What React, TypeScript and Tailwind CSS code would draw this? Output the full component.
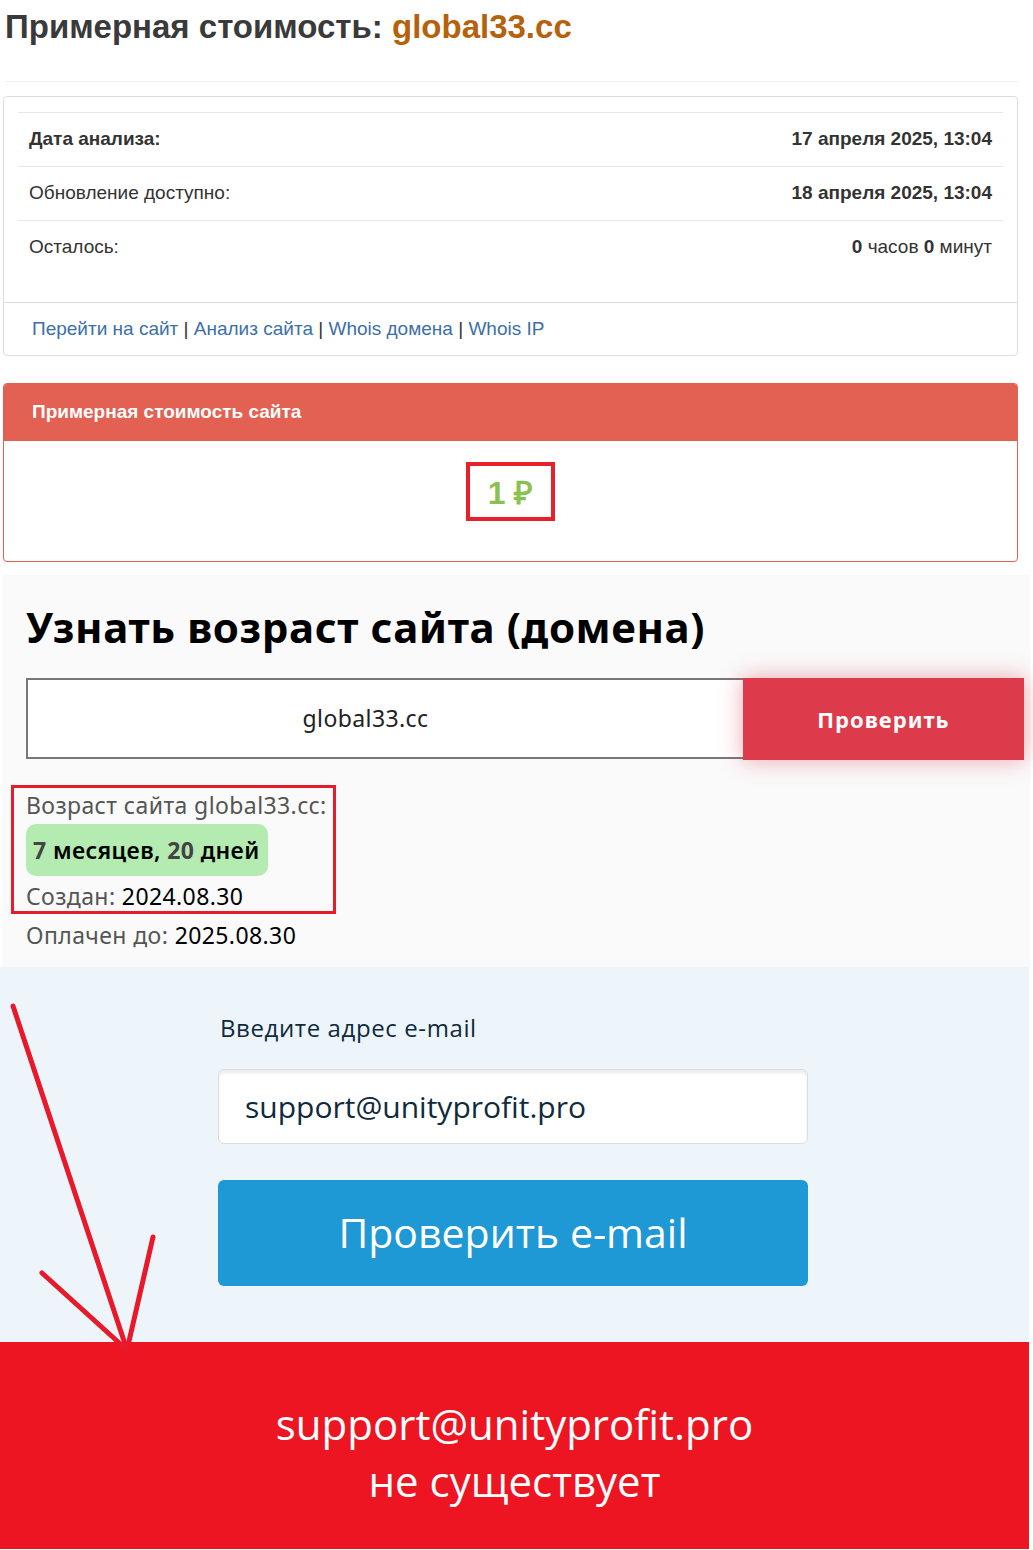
const rows = [
  { label: "Дата анализа:", value: "17 апреля 2025, 13:04", boldLabel: true },
  { label: "Обновление доступно:", value: "18 апреля 2025, 13:04", boldLabel: false },
]

const links = ["Перейти на сайт", "Анализ сайта", "Whois домена", "Whois IP"]

export default function App() {
  return (
    <div className="relative w-[1033px] min-h-[1550px] bg-white overflow-hidden">
      {/* Estimate block */}
      <div className="font-['Liberation_Sans',Arial,sans-serif] text-[#333]">
        <h1 className="pt-[9px] pl-[5px] text-[33px] leading-[36px] font-bold text-[#3a3a3a]">
          Примерная стоимость: <span className="text-[#b5620c]">global33.cc</span>
        </h1>
        <div className="mt-[36px] ml-[5px] w-[1013px] border-t border-[#eee]"></div>

        <div className="mt-[14px] ml-[3px] w-[1015px] rounded-[4px] border border-[#ddd]">
          <div className="px-[14px] pt-[15px]">
            {rows.map((row) => (
              <div
                key={row.label}
                className="flex h-[54px] items-center justify-between border-t border-[#e8e8e8] px-[11px] text-[19px]"
              >
                <span className={row.boldLabel ? "font-bold" : ""}>{row.label}</span>
                <span className="font-bold">{row.value}</span>
              </div>
            ))}
            <div className="flex h-[54px] items-center justify-between border-t border-[#e8e8e8] px-[11px] text-[19px]">
              <span>Осталось:</span>
              <span>
                <b>0</b> часов <b>0</b> минут
              </span>
            </div>
            <div className="h-[28px]"></div>
          </div>
          <div className="h-[53px] border-t border-[#ddd] pl-[28px] text-[19px] leading-[52px]">
            {links.map((l, i) => (
              <span key={l}>
                {i > 0 && <span className="text-[#333]">&nbsp;|&nbsp;</span>}
                <a className="text-[#3c6fa8]">{l}</a>
              </span>
            ))}
          </div>
        </div>

        <div className="mt-[27px] ml-[3px] w-[1015px] overflow-hidden rounded-[4px] border border-[#e36152]">
          <div className="flex h-[57px] items-center bg-[#e36152] px-[28px] text-[19px] font-bold text-white">
            Примерная стоимость сайта
          </div>
          <div className="flex h-[120px] justify-center pt-[21px]">
            <div className="flex h-[59px] w-[89px] items-center justify-center border-4 border-[#e8202a] pt-[3px]">
              <span className="text-[32px] font-bold text-[#8cc152]">1 ₽</span>
            </div>
          </div>
        </div>
      </div>

      {/* Domain age */}
      <div className="mt-[13px] ml-[2px] w-[1028px] bg-[#fafafa] pl-[24px] pt-[28px] pb-[13px] font-['Noto_Sans',sans-serif]">
        <h2 className="text-[42px] leading-[48px] font-bold tracking-[0.6px] text-black">Узнать возраст сайта (домена)</h2>
        <div className="mt-[27px] flex h-[82px]">
          <div className="flex h-[81px] w-[717px] items-center justify-center border-2 border-r-0 border-[#777] bg-white pr-[40px] text-[23px] tracking-[0.4px] text-[#222]">
            global33.cc
          </div>
          <div className="flex h-[82px] w-[281px] items-center justify-center bg-[#dd3b4b] text-[22px] font-bold tracking-[1px] text-white shadow-[0_0_22px_rgba(221,59,75,0.45)]">
            Проверить
          </div>
        </div>
        <div className="relative mt-[26px] text-[23px] tracking-[0.4px] text-[#555]">
          <div className="absolute left-[-15px] top-[-1px] h-[129px] w-[325px] border-[3px] border-[#e31e2a]"></div>
          <div className="h-[38px] leading-[38px]">Возраст сайта global33.cc:</div>
          <div className="flex h-[52px] w-[242px] items-center rounded-[10px] bg-[#b3ebb1] px-[7px] font-semibold text-black">
            <span className="font-bold text-[#444]">7</span>&nbsp;месяцев,&nbsp;
            <span className="font-bold text-[#444]">20</span>&nbsp;дней
          </div>
          <div className="h-[40px] leading-[40px]">
            Создан: <span className="text-black">2024.08.30</span>
          </div>
          <div className="h-[38px] leading-[38px]">
            Оплачен до: <span className="text-black">2025.08.30</span>
          </div>
        </div>
      </div>

      {/* Email check */}
      <div className="w-[1029px] bg-[#eef5fa] pl-[218px] pt-[46px] pb-[56px] font-['Open_Sans',sans-serif]">
        <div className="pl-[2px] text-[24px] leading-[30px] font-medium tracking-[0.6px] text-[#0f2a3d]">Введите адрес e-mail</div>
        <div className="mt-[26px] flex h-[75px] w-[590px] items-center rounded-[6px] border border-[#d9dee2] bg-white pl-[26px] text-[30px] text-[#0f2a3d] shadow-[inset_0_3px_3px_rgba(0,0,0,0.08)]">
          support@unityprofit.pro
        </div>
        <div className="mt-[36px] flex h-[106px] w-[590px] items-center justify-center rounded-[6px] bg-[#1f98d6] text-[41px] text-white">
          Проверить e-mail
        </div>
      </div>

      {/* Result */}
      <div className="h-[207px] w-[1029px] bg-[#ee1522] pt-[53px] text-center font-['Open_Sans',sans-serif] text-[42px] leading-[57px] text-white">
        <div>support@unityprofit.pro</div>
        <div>не существует</div>
      </div>

      {/* annotation arrow */}
      <svg className="pointer-events-none absolute left-0 top-0" width="1033" height="1550">
        <g stroke="#e8192a" strokeWidth="5" strokeLinecap="round" fill="none">
          <line x1="13" y1="1006" x2="127" y2="1350" />
          <line x1="42" y1="1273" x2="127" y2="1350" />
          <line x1="153" y1="1237" x2="127" y2="1350" />
        </g>
      </svg>
    </div>
  )
}
